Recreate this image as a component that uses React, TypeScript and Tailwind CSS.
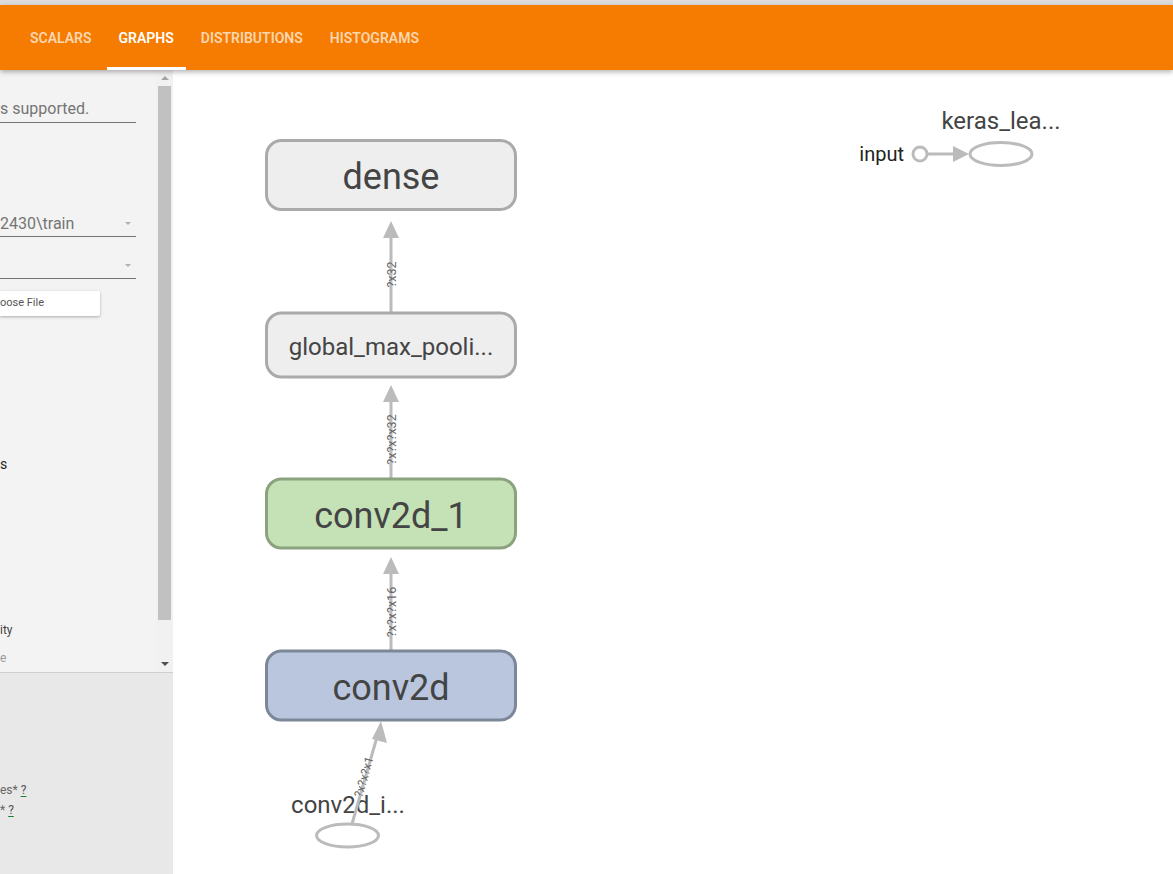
import React from 'react';

const tabs = ['Scalars', 'Graphs', 'Distributions', 'Histograms'];

function Header() {
  return (
    <div className="relative z-10 shrink-0">
      <div className="h-[5px] bg-[#dcdcdc]" />
      <div className="h-[65px] bg-[#f57c00] shadow-[0_2px_5px_rgba(0,0,0,0.3)] flex pl-[18px] gap-[3px]">
        {tabs.map((t) => (
          <div
            key={t}
            className={
              t === 'Graphs'
                ? 'px-3 pt-[4px] flex items-center border-b-[3px] border-white text-white text-[14px] font-semibold uppercase'
                : 'px-3 pt-[4px] flex items-center border-b-[3px] border-transparent text-white/70 text-[14px] font-semibold uppercase'
            }
          >
            {t}
          </div>
        ))}
      </div>
    </div>
  );
}

function Caret() {
  return <div className="w-0 h-0 border-l-[3px] border-r-[3px] border-t-[3px] border-l-transparent border-r-transparent border-t-[#b0b0b0]" />;
}

function Sidebar() {
  return (
    <div className="w-[173px] shrink-0 flex flex-col">
      {/* upper scrolled panel */}
      <div className="h-[603px] flex bg-[#f3f3f3] border-b border-[#cfcfcf]">
        <div className="flex-1 overflow-hidden whitespace-nowrap">
          <div className="mt-[24px] mr-[20px] h-[29px] pt-[3px] leading-[24px] text-[16px] text-[#757575] border-b border-[#757575]">
            s supported.
          </div>
          <div className="mt-[85px] mr-[20px] h-[29px] pt-[3px] leading-[24px] text-[16px] text-[#757575] border-b border-[#757575] flex items-center justify-between pr-[5px]">
            <span>2430\train</span>
            <Caret />
          </div>
          <div className="mt-[13px] mr-[20px] h-[29px] pt-[3px] leading-[24px] border-b border-[#757575] flex items-center justify-end pr-[5px]">
            <Caret />
          </div>
          <div className="mt-[12px] w-[100px] h-[25px] bg-white rounded-r-[2px] shadow-[0_1px_3px_rgba(0,0,0,0.3)] flex items-center text-[11px] text-[#555]">
            oose File
          </div>
          <div className="mt-[138px] leading-[20px] text-[14px] text-[#222]">s</div>
          <div className="mt-[148px] leading-[16px] text-[12px] text-[#444]">ity</div>
          <div className="mt-[12px] leading-[16px] text-[12px] text-[#999]">e</div>
        </div>
        <div className="w-[17px] bg-[#f1f1f1] flex flex-col items-center">
          <div className="h-[16px] flex items-center justify-center">
            <div className="w-0 h-0 border-l-[4px] border-r-[4px] border-b-[4px] border-l-transparent border-r-transparent border-b-[#a3a3a3]" />
          </div>
          <div className="w-[13px] h-[534px] bg-[#c1c1c1]" />
          <div className="flex-1 flex items-end justify-center pb-[6px]">
            <div className="w-0 h-0 border-l-[4px] border-r-[4px] border-t-[4px] border-l-transparent border-r-transparent border-t-[#505050]" />
          </div>
        </div>
      </div>
      {/* lower panel */}
      <div className="flex-1 bg-[#e8e8e8] whitespace-nowrap overflow-hidden">
        <div className="mt-[109px] leading-[16px] text-[12px] text-[#666]">
          es* <span className="text-[#555] underline decoration-[#1e7e34] underline-offset-2">?</span>
        </div>
        <div className="mt-[4px] leading-[16px] text-[12px] text-[#666]">
          * <span className="text-[#555] underline decoration-[#1e7e34] underline-offset-2">?</span>
        </div>
      </div>
    </div>
  );
}

type NodeProps = { y: number; h: number; label: string; size: number; fill: string; stroke: string };

function OpNode({ y, h, label, size, fill, stroke }: NodeProps) {
  return (
    <g>
      <rect x={266.5} y={y} width={249} height={h} rx={15} fill={fill} stroke={stroke} strokeWidth={3} />
      <text x={391} y={y + h / 2 + 2} textAnchor="middle" dominantBaseline="central" fontSize={size} fill="#444">
        {label}
      </text>
    </g>
  );
}

function UpEdge({ from, tip, label }: { from: number; tip: number; label: string }) {
  const mid = (from + tip + 16) / 2;
  return (
    <g>
      <line x1={391} y1={from} x2={391} y2={tip + 14} stroke="#bbb" strokeWidth={3} />
      <polygon points={`391,${tip} 383,${tip + 17} 399,${tip + 17}`} fill="#bbb" />
      <text
        x={391}
        y={mid}
        transform={`rotate(-90 391 ${mid})`}
        textAnchor="middle"
        dominantBaseline="central"
        fontSize={12.5}
        fill="#666"
      >
        {label}
      </text>
    </g>
  );
}

function Graph() {
  return (
    <svg className="block" width={1000} height={804} viewBox="173 70 1000 804" fontFamily="Roboto, sans-serif">
      <UpEdge from={312} tip={221} label="?x32" />
      <UpEdge from={478} tip={385} label="?x?x?x32" />
      <UpEdge from={651} tip={557} label="?x?x?x16" />

      <OpNode y={140.5} h={69} label="dense" size={36} fill="#eeeeee" stroke="#aaaaaa" />
      <OpNode y={313} h={64} label="global_max_pooli..." size={24} fill="#eeeeee" stroke="#aaaaaa" />
      <OpNode y={479} h={69} label="conv2d_1" size={36} fill="#c5e1b6" stroke="#8ba27e" />
      <OpNode y={651} h={69} label="conv2d" size={36} fill="#b9c6de" stroke="#7d879a" />

      {/* input placeholder */}
      <text x={348} y={805} textAnchor="middle" dominantBaseline="central" fontSize={24} fill="#444">
        conv2d_i...
      </text>
      <line x1={352} y1={824} x2={377} y2={737} stroke="#bbb" strokeWidth={3} />
      <polygon points="381,721 372,739 387,743" fill="#bbb" />
      <text
        x={364}
        y={777}
        transform="rotate(-74 364 777)"
        textAnchor="middle"
        dominantBaseline="central"
        fontSize={12}
        fill="#666"
      >
        ?x?x?x1
      </text>
      <ellipse cx={347.5} cy={835.5} rx={31} ry={11.5} fill="white" stroke="#bbb" strokeWidth={3} />

      {/* auxiliary node */}
      <text x={1001} y={121} textAnchor="middle" dominantBaseline="central" fontSize={24} fill="#444">
        keras_lea...
      </text>
      <text x={904} y={154} textAnchor="end" dominantBaseline="central" fontSize={20} fill="#222">
        input
      </text>
      <circle cx={920} cy={154} r={7} fill="white" stroke="#bbb" strokeWidth={3} />
      <line x1={927} y1={154} x2={956} y2={154} stroke="#bbb" strokeWidth={3} />
      <polygon points="969,154 953,146 953,162" fill="#bbb" />
      <ellipse cx={1001} cy={154} rx={31} ry={11.5} fill="white" stroke="#bbb" strokeWidth={3} />
    </svg>
  );
}

export default function App() {
  return (
    <div className="w-full h-[874px] overflow-hidden flex flex-col bg-white font-['Roboto',sans-serif]">
      <Header />
      <div className="flex flex-1 min-h-0">
        <Sidebar />
        <div className="flex-1 bg-white overflow-hidden">
          <Graph />
        </div>
      </div>
    </div>
  );
}
